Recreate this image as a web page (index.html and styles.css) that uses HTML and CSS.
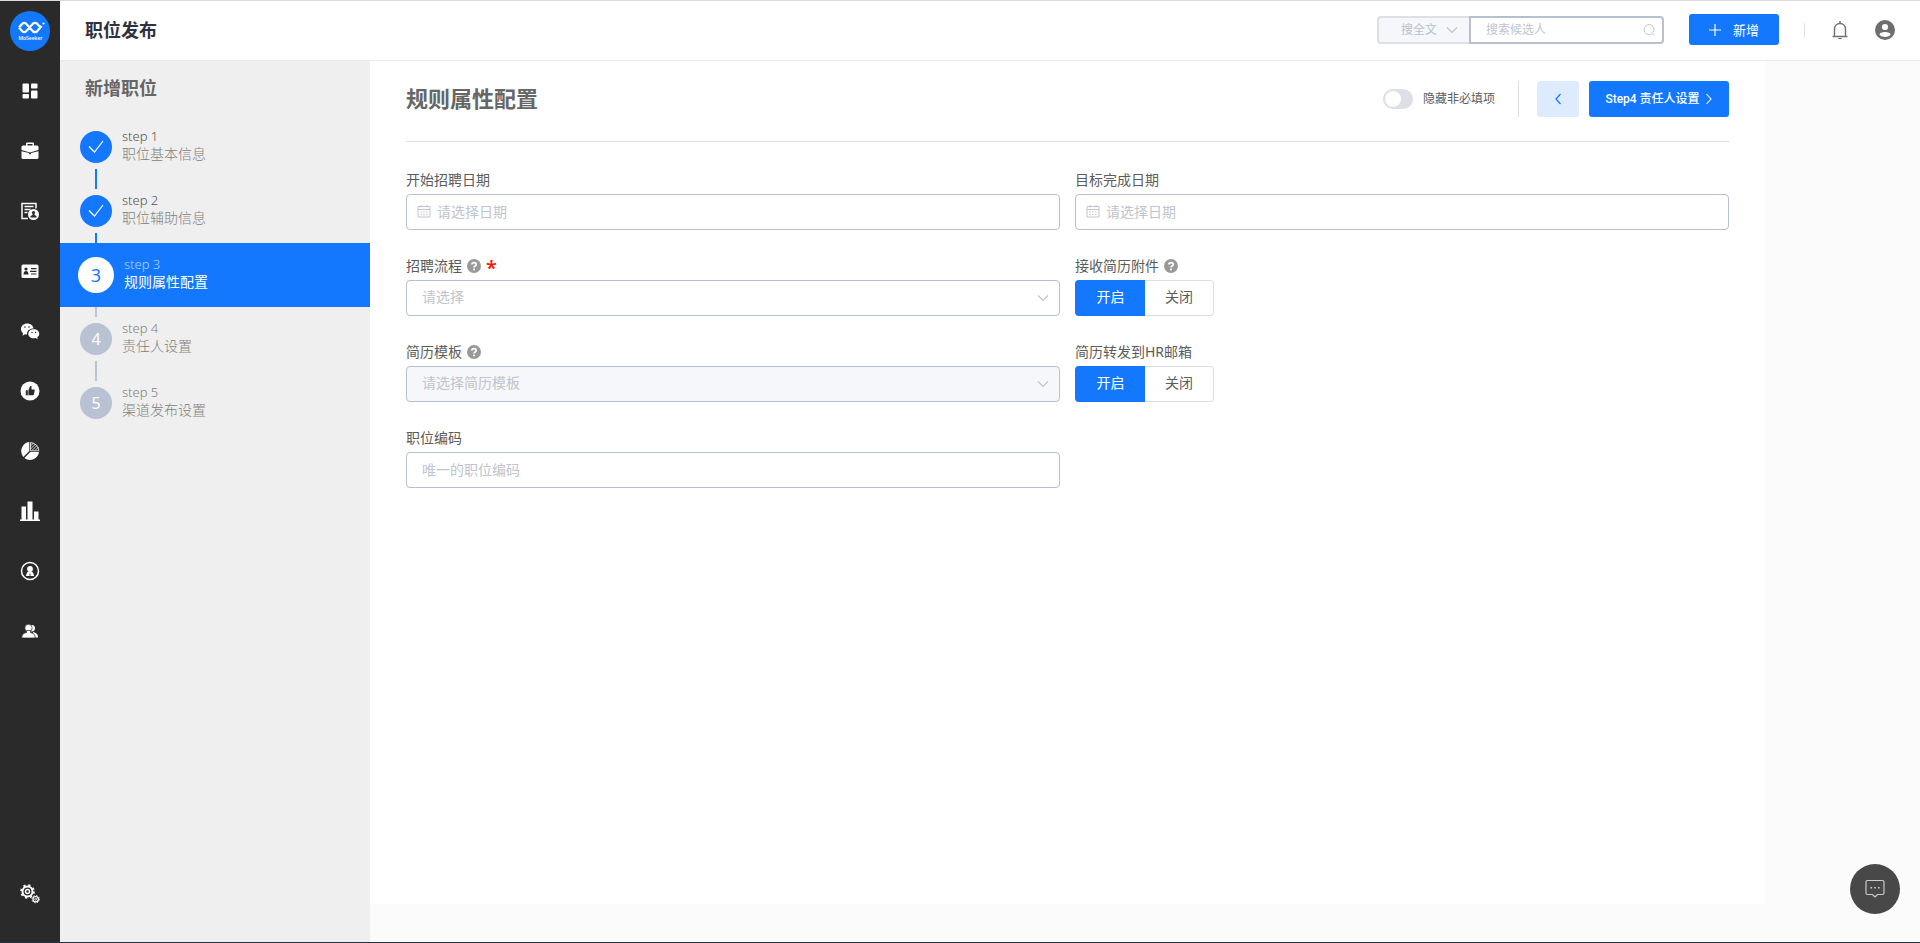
FILE: index.html
```html
<!DOCTYPE html>
<html lang="zh-CN">
<head>
<meta charset="utf-8">
<title>职位发布</title>
<link rel="stylesheet" href="styles.css">
</head>
<body>
<svg class="sprite" aria-hidden="true">
  <symbol id="chevron-down" viewBox="0 0 12 12"><path d="M1 3.500l5 5 5-5" fill="none" stroke="currentColor" stroke-width="1.200"/></symbol>
  <symbol id="check" viewBox="0 0 16 16"><path d="M1 7.500l5.500 5.500L15 2" fill="none" stroke="currentColor" stroke-width="1.200"/></symbol>
  <symbol id="calendar" viewBox="0 0 14 14"><path d="M1 2.500h12v10.500H1zM1 5.500h12M4 1v2.500M10 1v2.500M3.500 8h1.500M6.200 8h1.500M9 8h1.500M3.500 10.500h1.500M6.200 10.500h1.500M9 10.500h1.500" fill="none" stroke="currentColor"/></symbol>
  <symbol id="question" viewBox="0 0 14 14"><circle cx="7" cy="7" r="7" fill="#999"/><path d="M4.900 5.600c0-2.700 4.300-2.600 4.300-.2C9.200 7 7 6.900 7 8.500" fill="none" stroke="#fff" stroke-width="1.700"/><rect x="6.100" y="9.600" width="1.800" height="1.700" fill="#fff"/></symbol>
</svg>
<div class="app">
  <nav class="rail" aria-label="主导航">
    <a class="logo" href="#" aria-label="MoSeeker">
      <svg viewBox="0 0 40 40"><circle cx="20" cy="20" r="20" fill="#1478ff"/><path d="M9 16.500l3.500-4q1.700-1.200 3.400 0l7.200 8q1.900 1.300 3.800 0l4.600-5.500M9 16.500l3.500 4q1.700 1.300 3.400 0l7.200-8q1.900-1.200 3.800 0l3.600 4" fill="none" stroke="#fff" stroke-width="2.200" stroke-linejoin="round"/><circle cx="33.500" cy="12.500" r="1.100" fill="#fff"/><text class="logo-text" x="20.500" y="29" text-anchor="middle">MoSeeker</text></svg>
    </a>
    <a href="#" aria-label="工作台"><svg viewBox="0 0 20 20"><g fill="#fff"><rect x="2.500" y="2.500" width="6.500" height="9" rx="1"/><rect x="11" y="2.500" width="6.500" height="5" rx="1"/><rect x="2.500" y="13" width="6.500" height="4.500" rx="1"/><rect x="11" y="9.500" width="6.500" height="8" rx="1"/></g></svg></a>
    <a href="#" aria-label="职位"><svg viewBox="0 0 20 20"><path d="M6 4.500V2.700Q6 1.500 7.200 1.500h5.600Q14 1.500 14 2.700v1.800h3q1.500 0 1.500 1.500v3L10 11.500 1.500 9V6Q1.500 4.500 3 4.500zM7.500 4.500h5V3h-5zM1.500 10.200L9 12.100v1.200h2v-1.200l7.500-1.900v6.300q0 1.500-1.500 1.500H3q-1.500 0-1.500-1.500z" fill="#fff" fill-rule="evenodd"/></svg></a>
    <a href="#" aria-label="简历"><svg viewBox="0 0 20 20"><path d="M16 7.500V2.500H2v15h6M4.500 5.500h9M4.500 8.500h6M4.500 11.500h3" fill="none" stroke="#fff" stroke-width="1.500"/><circle cx="13.500" cy="13.500" r="5.500" fill="#fff"/><circle cx="13.500" cy="11.500" r="1.600" fill="#2a2a2a"/><path d="M12.500 12.500h2v1.500l2 1v1.500h-6V15l2-1z" fill="#2a2a2a"/></svg></a>
    <a href="#" aria-label="人才"><svg viewBox="0 0 20 20"><rect x="1.500" y="3.500" width="17" height="13.500" rx="1.500" fill="#fff"/><g fill="#2a2a2a"><circle cx="6" cy="8" r="1.600"/><path d="M3.500 13.500q0-3.500 2.500-3.500t2.500 3.500zM11 7h5.500v1.200H11zM10 9.700h6.500v1.200H10zM11 12.400h5.500v1.200H11z"/></g></svg></a>
    <a href="#" aria-label="微信"><svg viewBox="0 0 20 20"><path d="M7 2.500c3.600 0 6.300 2.300 6.500 5-4 0-6.500 2.400-6.500 5.400v.6l-2-.3-2.500 1.500.6-2.400C1.800 11.200 1 9.600 1 7.900 1 5 3.700 2.500 7 2.500z" fill="#fff"/><path d="M13.800 8.200c3.100 0 5.500 2.100 5.500 4.600 0 1.500-.8 2.700-2 3.500l.4 2-2.100-1.200c-4.200.9-7.300-1.200-7.300-4.300 0-2.500 2.400-4.600 5.500-4.600z" fill="#fff"/><g fill="#2a2a2a"><circle cx="5" cy="6" r=".8"/><circle cx="9" cy="6" r=".8"/><circle cx="12" cy="11.500" r=".7"/><circle cx="15.600" cy="11.500" r=".7"/></g></svg></a>
    <a href="#" aria-label="推荐"><svg viewBox="0 0 20 20"><circle cx="10" cy="10" r="9.500" fill="#fff"/><path d="M5.800 9.200h2v5h-2zM8.400 9.200L10.200 5h1.300v3.500H14q.8 0 .7.800l-.8 4.100q-.2.800-1 .8H8.400z" fill="#2a2a2a"/></svg></a>
    <a href="#" aria-label="分析"><svg viewBox="0 0 20 20"><path d="M9.300 1v8.900l-6 6A9.200 9.200 0 0 1 9.300 1zM10.300 11H19a9 9 0 0 1-14.600 5.900z" fill="#fff"/><path d="M10.500 1.500A9 9 0 0 1 18.900 9.800H10.500zM10.500 5l3-3M10.500 8l5-5M12 9.500l5-5M15 9.500l3.500-3.500" fill="none" stroke="#fff" stroke-width=".8"/></svg></a>
    <a href="#" aria-label="统计"><svg viewBox="0 0 20 20"><path d="M0 18.600h20V20H0zM1.500 5.500h4.500v13H1.500zM7.500.5h5v18h-5zM14 10.500h4.500v8H14z" fill="#fff"/></svg></a>
    <a href="#" aria-label="员工"><svg viewBox="0 0 20 20"><circle cx="10" cy="10" r="8.500" fill="none" stroke="#fff" stroke-width="1.500"/><circle cx="10" cy="8" r="2.900" fill="#fff"/><path d="M5.800 15l1.200-3.500 2-1h2l2 1 1.200 3.500z" fill="#fff"/><path d="M10 12l.8 2.500h-1.600z" fill="#2a2a2a"/></svg></a>
    <a href="#" aria-label="用户"><svg viewBox="0 0 20 20"><circle cx="11.700" cy="7.300" r="3.200" fill="#fff"/><path d="M10 16.500h8c0-3-1-4-4.500-5.500z" fill="#fff"/><circle cx="8.500" cy="7" r="3.700" fill="#fff" stroke="#2a2a2a" stroke-width=".7"/><path d="M1.800 17c0-3.500 1.500-4.800 4.700-5.500v-2h4v2c3.200.7 4.700 2 4.700 5.500z" fill="#fff" stroke="#2a2a2a" stroke-width=".7"/></svg></a>
    <a class="rail-settings" href="#" aria-label="设置"><svg viewBox="0 0 20 20"><g fill="none" stroke="#fff"><circle cx="7.500" cy="7.500" r="5" stroke-width="2"/><circle cx="7.500" cy="7.500" r="6.400" stroke-width="1.800" stroke-dasharray="2.200 2.827"/><circle cx="7.500" cy="7.500" r="2" stroke-width="1.400"/><circle cx="15.700" cy="15.200" r="2.700" stroke-width="1.200"/><circle cx="15.700" cy="15.200" r="3.700" stroke-dasharray="1.300 1.600"/><circle cx="15.700" cy="15.200" r="1" stroke-width=".8"/></g></svg></a>
  </nav>

  <div class="page">
    <header class="topbar">
      <h1>职位发布</h1>
      <form class="search" role="search">
        <div class="search-scope">
          <select aria-label="搜索范围" disabled><option>搜全文</option></select>
          <svg class="caret"><use href="#chevron-down"/></svg>
        </div>
        <div class="search-box">
          <input type="text" placeholder="搜索候选人" aria-label="搜索候选人">
          <svg viewBox="0 0 12 12"><path d="M8.200 10A5 5 0 1 1 10 8.500M8.500 8.500l2.500 2.800" fill="none" stroke="currentColor"/></svg>
        </div>
      </form>
      <button class="btn add" type="button"><svg viewBox="0 0 12 12"><path d="M6 0v12M0 6h12" stroke="#fff" stroke-width="1.200"/></svg>新增</button>
      <span class="bar-divider"></span>
      <button class="icon-btn bell" type="button" aria-label="通知"><svg viewBox="0 0 20 20"><path d="M2.500 16.500h15M4.500 16V9C4.500 5.500 7 3.500 10 3.500S15.500 5.500 15.500 9v7M10 3.500V1" fill="none" stroke="#6e6e6e" stroke-width="1.400"/><path d="M8 18h4v.5q-2 1.500-4 0z" fill="#6e6e6e"/></svg></button>
      <button class="icon-btn" type="button" aria-label="账户"><svg viewBox="0 0 20 20"><circle cx="10" cy="10" r="10" fill="#6e6e6e"/><circle cx="10" cy="7" r="3.100" fill="#fff"/><path d="M4.500 14.800c0-3.600 11-3.600 11 0-2.500 3-8.500 3-11 0z" fill="#fff"/></svg></button>
    </header>

    <div class="workspace">
      <aside class="steps">
        <h2>新增职位</h2>
        <ol>
          <li class="step done"><span class="dot"><svg><use href="#check"/></svg></span><div class="step-text"><span class="step-no">step 1</span><span>职位基本信息</span></div></li>
          <li class="step done"><span class="dot"><svg><use href="#check"/></svg></span><div class="step-text"><span class="step-no">step 2</span><span>职位辅助信息</span></div></li>
          <li class="step active" aria-current="step"><span class="dot">3</span><div class="step-text"><span class="step-no">step 3</span><span>规则属性配置</span></div></li>
          <li class="step todo"><span class="dot">4</span><div class="step-text"><span class="step-no">step 4</span><span>责任人设置</span></div></li>
          <li class="step todo"><span class="dot">5</span><div class="step-text"><span class="step-no">step 5</span><span>渠道发布设置</span></div></li>
        </ol>
      </aside>

      <main class="panel">
        <div class="panel-head">
          <h2>规则属性配置</h2>
          <input class="switch" type="checkbox" role="switch" id="hide-optional">
          <label class="switch-label" for="hide-optional">隐藏非必填项</label>
          <span class="head-divider"></span>
          <button class="btn back" type="button" aria-label="上一步"><svg viewBox="0 0 8 12"><path d="M6.500 1L2 6l4.500 5" fill="none" stroke="currentColor" stroke-width="1.200"/></svg></button>
          <button class="btn next" type="button">Step4 责任人设置<svg viewBox="0 0 8 12"><path d="M1.500 1L6 6l-4.500 5" fill="none" stroke="currentColor" stroke-width="1.100"/></svg></button>
        </div>

        <form class="fields">
          <div class="field">
            <div class="caption"><label for="start-date">开始招聘日期</label></div>
            <div class="control"><svg class="lead"><use href="#calendar"/></svg><input class="box dated" id="start-date" type="text" placeholder="请选择日期"></div>
          </div>
          <div class="field">
            <div class="caption"><label for="end-date">目标完成日期</label></div>
            <div class="control"><svg class="lead"><use href="#calendar"/></svg><input class="box dated" id="end-date" type="text" placeholder="请选择日期"></div>
          </div>
          <div class="field">
            <div class="caption"><label for="process">招聘流程</label><svg><use href="#question"/></svg><span class="required">*</span></div>
            <div class="control"><select class="box" id="process"><option>请选择</option></select><svg class="caret"><use href="#chevron-down"/></svg></div>
          </div>
          <div class="field" role="radiogroup" aria-labelledby="attach-cap">
            <div class="caption"><span id="attach-cap">接收简历附件</span><svg><use href="#question"/></svg></div>
            <div class="choices">
              <input type="radio" name="attach" id="attach-on" checked><label for="attach-on">开启</label>
              <input type="radio" name="attach" id="attach-off"><label for="attach-off">关闭</label>
            </div>
          </div>
          <div class="field">
            <div class="caption"><label for="template">简历模板</label><svg><use href="#question"/></svg></div>
            <div class="control"><select class="box" id="template" disabled><option>请选择简历模板</option></select><svg class="caret"><use href="#chevron-down"/></svg></div>
          </div>
          <div class="field" role="radiogroup" aria-labelledby="forward-cap">
            <div class="caption"><span id="forward-cap">简历转发到HR邮箱</span></div>
            <div class="choices">
              <input type="radio" name="forward" id="forward-on" checked><label for="forward-on">开启</label>
              <input type="radio" name="forward" id="forward-off"><label for="forward-off">关闭</label>
            </div>
          </div>
          <div class="field">
            <div class="caption"><label for="code">职位编码</label></div>
            <div class="control"><input class="box" id="code" type="text" placeholder="唯一的职位编码"></div>
          </div>
        </form>
      </main>
    </div>
  </div>
</div>
<button class="chat" type="button" aria-label="在线客服"><svg viewBox="0 0 20 20"><path d="M2.500 1.500h15q1.500 0 1.500 1.500v11q0 1.500-1.500 1.500h-5L10 18l-2.500-2.500h-5Q1 15.500 1 14V3q0-1.500 1.500-1.500z" fill="none" stroke="#ccc" stroke-width="1.200"/><path d="M5.500 8h1.600v1.600H5.500zM9.200 8h1.600v1.600H9.200zM13 8h1.600v1.600H13z" fill="#ccc"/></svg></button>
</body>
</html>
```
FILE: styles.css
```css
:root {
  --blue: #1478ff;
  --line: #b8c0d0;
  --line-light: #dcdfe6;
  --hint: #c0c4cc;
  --text: #5c5c5c;
  --dark: #2a2a2a;
}
* { box-sizing: border-box; }
body {
  margin: 0;
  color: var(--text);
  font: 14px/20px "Noto Sans", "Noto Sans CJK SC", sans-serif;
}
h1, h2, ol { margin: 0; padding: 0; font-weight: 700; }
button, input, select { font: inherit; color: inherit; margin: 0; }
svg { display: block; flex: none; }
.sprite { display: none; }

.app {
  display: flex;
  min-height: 100vh;
  border-top: 1px solid #d8dade;
  border-bottom: 1px solid #22343c;
  background: #fbfbfb;
}

/* Navigation rail */
.rail {
  flex: none;
  display: flex;
  flex-direction: column;
  width: 60px;
  padding-bottom: 18px;
  background: var(--dark);
}
.rail a {
  display: flex;
  align-items: center;
  justify-content: center;
  height: 60px;
}
.rail svg { width: 20px; height: 20px; }
.rail .logo svg { width: 40px; height: 40px; }
.logo-text { font: 600 5px "Open Sans", sans-serif; fill: #fff; }
.rail .rail-settings { margin-top: auto; }

.page { flex: 1; display: flex; flex-direction: column; min-width: 0; }

/* Top bar */
.topbar {
  display: flex;
  align-items: center;
  height: 60px;
  padding: 0 25px 2px;
  border-bottom: 1px solid #e8e9f0;
  background: #fff;
}
.topbar h1 { flex: 1; font-size: 18px; line-height: 24px; color: #303140; }
.search { display: flex; width: 287px; height: 28px; font-size: 12px; color: var(--hint); }
.search-scope, .search-box, .control { position: relative; }
.search-scope { width: 92px; }
.search-scope select {
  width: 100%;
  height: 100%;
  padding: 0 22px;
  appearance: none;
  border: 2px solid var(--line-light);
  border-right: 0;
  border-radius: 4px 0 0 4px;
  background: #f5f7fa;
  color: var(--line);
  opacity: 1;
}
.search-box { flex: 1; }
.search-box input {
  width: 100%;
  height: 100%;
  padding: 0 28px 0 15px;
  border: 2px solid var(--line);
  border-radius: 0 4px 4px 0;
}
.search-box svg { position: absolute; top: 8px; right: 9px; width: 12px; height: 12px; }
.caret {
  position: absolute;
  top: 50%;
  right: 11px;
  width: 12px;
  height: 12px;
  margin-top: -6px;
  color: var(--hint);
  pointer-events: none;
}
::placeholder { color: var(--hint); opacity: 1; }

.btn {
  display: flex;
  align-items: center;
  justify-content: center;
  height: 36px;
  padding: 0;
  border: 0;
  border-radius: 3px;
  background: var(--blue);
  color: #fff;
  font-size: 12px;
}
.btn.add { width: 90px; height: 31px; gap: 12px; margin-left: 25px; font-size: 13px; }
.btn.add svg { width: 12px; height: 12px; }
.bar-divider { width: 1px; height: 14px; margin: 0 25px; background: var(--line-light); }
.icon-btn { padding: 0; border: 0; background: none; }
.icon-btn svg { width: 20px; height: 20px; }
.bell { margin-right: 25px; }

/* Steps */
.workspace { flex: 1; display: flex; }
.steps { flex: none; width: 310px; background: #efefef; }
.steps h2 { padding: 15px 25px; font-size: 18px; line-height: 24px; color: #666; }
.steps ol { list-style: none; }
.step {
  position: relative;
  display: flex;
  align-items: center;
  gap: 10px;
  height: 64px;
  padding-left: 20px;
  font-weight: 300;
  color: #808080;
}
.dot {
  display: flex;
  align-items: center;
  justify-content: center;
  width: 32px;
  height: 32px;
  border-radius: 50%;
  background: #b8c2d2;
  color: #fff;
  font-size: 16px;
  font-weight: 400;
}
.dot svg { width: 16px; height: 16px; }
.done .dot { background: var(--blue); }
.step-text { display: flex; flex-direction: column; padding-bottom: 4px; line-height: 17px; }
.step-no { font-size: 13px; }
.done .step-no { color: #555; }
.active { z-index: 1; padding-left: 18px; background: var(--blue); color: #fff; font-weight: 400; }
.active .dot { width: 36px; height: 36px; background: #fff; color: var(--blue); font-size: 18px; }
.active .step-no { color: #b3d3ff; font-weight: 300; }
.step:not(.active, :last-child)::after,
.active + .step::before {
  content: "";
  position: absolute;
  left: 35px;
  bottom: -10px;
  width: 2px;
  height: 20px;
  background: #b8c2d2;
}
.step.done::after { background: var(--blue); }
.active + .step::before { top: -10px; bottom: auto; }

/* Form panel */
.panel {
  flex: 1;
  margin: 0 155px 38px 0;
  padding: 20px 36px;
  background: #fff;
}
.panel-head {
  display: flex;
  align-items: center;
  padding-bottom: 24px;
  border-bottom: 1px solid var(--line-light);
}
.panel-head h2 { flex: 1; font-size: 22px; line-height: 34px; padding-bottom: 2px; color: #666; }
.switch {
  appearance: none;
  display: flex;
  align-items: center;
  width: 30px;
  height: 20px;
  padding: 2px;
  border-radius: 10px;
  background: var(--line-light);
}
.switch::before { content: ""; width: 16px; height: 16px; border-radius: 50%; background: #fff; }
.switch:checked { justify-content: flex-end; background: var(--blue); }
.switch-label { margin-left: 10px; font-size: 12px; }
.head-divider { width: 1px; height: 36px; margin: 0 18px 0 23px; background: var(--line-light); }
.btn.back { width: 42px; background: #deebff; color: var(--blue); }
.btn.next { width: 140px; gap: 5px; margin-left: 10px; font-family: Roboto, "Noto Sans CJK SC", sans-serif; font-weight: 500; }
.btn.back svg, .btn.next svg { width: 8px; height: 12px; }

.fields {
  display: grid;
  grid-template-columns: 1fr 1fr;
  gap: 26px 15px;
  padding-top: 28px;
}
.caption { display: flex; align-items: center; gap: 5px; height: 20px; margin-bottom: 4px; }
.caption svg { width: 14px; height: 14px; }
.required { color: #f51d0a; font-size: 20px; font-weight: 600; line-height: 22px; height: 18px; }
.box {
  display: block;
  width: 100%;
  height: 36px;
  padding: 0 15px 2px;
  appearance: none;
  border: 1px solid var(--line);
  border-radius: 4px;
  background: #fff;
  color: var(--hint);
}
.box:disabled { background: #f5f7fa; opacity: 1; }
.box.dated { padding-left: 30px; }
.lead { position: absolute; top: 10px; left: 11px; width: 14px; height: 14px; color: var(--hint); }
.choices { display: flex; }
.choices input { position: absolute; opacity: 0; }
.choices label {
  width: 70px;
  height: 36px;
  border: 1px solid var(--line-light);
  line-height: 32px;
  text-align: center;
}
.choices label:first-of-type { border-right: 0; border-radius: 4px 0 0 4px; }
.choices label:last-of-type { width: 69px; border-left: 0; border-radius: 0 4px 4px 0; }
.choices input:checked + label { border-color: var(--blue); background: var(--blue); color: #fff; }

.chat {
  position: fixed;
  right: 20px;
  bottom: 29px;
  display: flex;
  align-items: center;
  justify-content: center;
  width: 50px;
  height: 50px;
  padding: 0;
  border: 0;
  border-radius: 50%;
  background: #484848;
}
.chat svg { width: 20px; height: 20px; }
```
